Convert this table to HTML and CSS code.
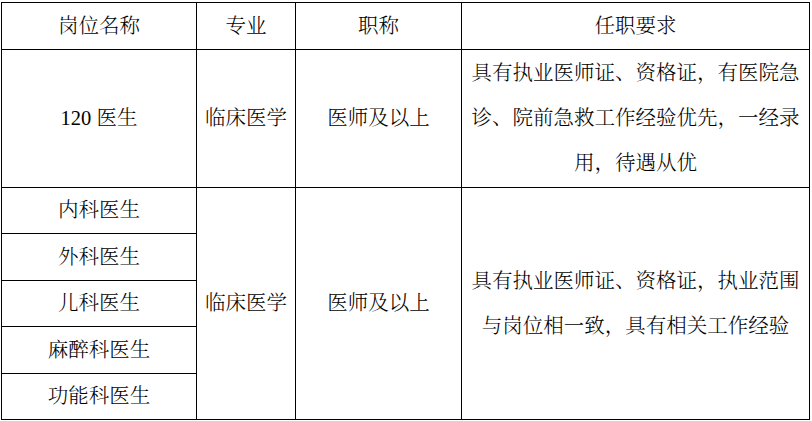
FILE: index.html
```html
<!DOCTYPE html>
<html lang="zh-CN">
<head>
<meta charset="utf-8">
<title>岗位表</title>
<link rel="stylesheet" href="styles.css">
</head>
<body>
<div class="table">
  <div class="cell">岗位名称</div>
  <div class="cell">专业</div>
  <div class="cell">职称</div>
  <div class="cell">任职要求</div>

  <div class="cell">120 医生</div>
  <div class="cell">临床医学</div>
  <div class="cell">医师及以上</div>
  <div class="cell req">具有执业医师证、资格证，有医院急<br>诊、院前急救工作经验优先，一经录<br>用，待遇从优</div>

  <div class="cell r3">内科医生</div>
  <div class="cell span c2">临床医学</div>
  <div class="cell span c3">医师及以上</div>
  <div class="cell span c4 req">具有执业医师证、资格证，执业范围<br>与岗位相一致，具有相关工作经验</div>
  <div class="cell r4">外科医生</div>
  <div class="cell r5">儿科医生</div>
  <div class="cell r6">麻醉科医生</div>
  <div class="cell r7">功能科医生</div>
</div>
</body>
</html>
```

FILE: styles.css
```css
html, body {
  margin: 0;
  padding: 0;
  background: #fff;
}
body {
  font-family: "Liberation Serif", "Noto Serif CJK SC", "Noto Sans CJK SC", serif;
  font-size: 20.5px;
  font-weight: 300;
  color: #000;
}
.table {
  display: grid;
  grid-template-columns: 195px 99px 166px 348px;
  grid-template-rows: 47px 138px 46px 47px 46px 47px 46px;
  width: max-content;
  margin: 2px 0 0 1px;
  border-top: 1px solid #000;
  border-left: 1px solid #000;
}
.cell {
  box-sizing: border-box;
  border-right: 1px solid #000;
  border-bottom: 1px solid #000;
  display: flex;
  align-items: center;
  justify-content: center;
  text-align: center;
  white-space: nowrap;
  line-height: 45px;
}
.r3 { grid-column: 1; grid-row: 3; }
.r4 { grid-column: 1; grid-row: 4; }
.r5 { grid-column: 1; grid-row: 5; }
.r6 { grid-column: 1; grid-row: 6; }
.r7 { grid-column: 1; grid-row: 7; }
.span { grid-row: 3 / span 5; }
.c2 { grid-column: 2; }
.c3 { grid-column: 3; }
.c4 { grid-column: 4; }
```
